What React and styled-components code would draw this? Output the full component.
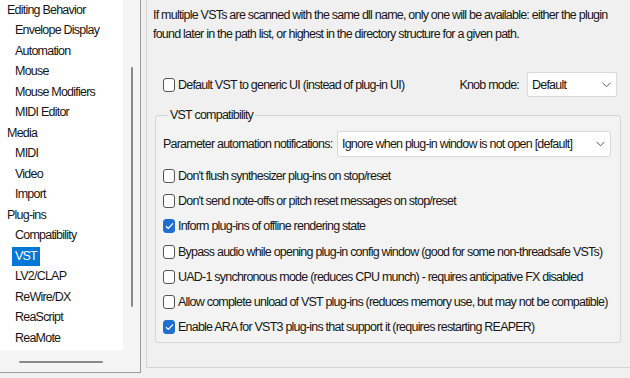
import styled, { createGlobalStyle } from 'styled-components';

const GlobalStyle = createGlobalStyle`
  html, body {
    margin: 0;
    padding: 0;
    background: #f0f0f0;
  }
  body {
    font-family: "Liberation Sans", Arial, sans-serif;
    font-size: 12.5px;
    letter-spacing: -0.78px;
    color: #161616;
  }
  * {
    box-sizing: border-box;
  }
`;

const Window = styled.div`
  display: flex;
  width: 630px;
  height: 378px;
  overflow: hidden;
  background: #f0f0f0;
`;

const TreePanel = styled.div`
  flex: 0 0 141px;
  height: 373px;
  display: grid;
  grid-template-columns: 123px 17px;
  grid-template-rows: 350px 22px;
  border-right: 1px solid #9c9c9c;
  border-bottom: 1px solid #9c9c9c;
  background: #f5f5f5;
`;

const TreeList = styled.div`
  background: #fff;
  overflow: hidden;
`;

const TreeItem = styled.div`
  height: 20.5px;
  display: flex;
  align-items: center;
  padding-left: ${p => (p.$child ? 12 : 4)}px;
  white-space: nowrap;
`;

const TreeLabel = styled.span`
  height: 19px;
  line-height: 19px;
  padding: 0 3px;
  background: ${p => (p.$selected ? '#0078d7' : 'transparent')};
  color: ${p => (p.$selected ? '#fff' : '#161616')};
`;

const VScroll = styled.div`
  padding: 67px 0 0 8px;
`;

const HScroll = styled.div`
  padding: 11px 0 0 19px;
`;

const Thumb = styled.div`
  width: ${p => p.$w}px;
  height: ${p => p.$h}px;
  background: #8a8a8a;
  border-radius: 1px;
`;

const MainBox = styled.div`
  flex: 1;
  height: 368px;
  margin-left: 5px;
  border-left: 1px solid #d6d6d6;
  border-bottom: 1px solid #d6d6d6;
  padding-top: 6px;
`;

const Description = styled.div`
  padding-left: 6px;
  line-height: 19px;
  white-space: nowrap;
`;

const Body = styled.div`
  width: 466px;
  margin: 28px 0 0 8px;
`;

const TopRow = styled.div`
  height: 25px;
  display: flex;
  align-items: center;
  padding: 0 4px 0 8px;
`;

const KnobMode = styled.div`
  margin-left: auto;
  display: flex;
  align-items: center;
  gap: 8px;
  white-space: nowrap;
`;

const Option = styled.label`
  display: flex;
  align-items: center;
  gap: 3px;
  height: ${p => p.$h || 25.3}px;
  white-space: nowrap;
`;

const Box = styled.span`
  flex: 0 0 12px;
  width: 12px;
  height: 14px;
  border-radius: 3px;
  border: 1px solid ${p => (p.$checked ? '#1f6fd1' : '#555')};
  background: ${p => (p.$checked ? '#1f6fd1' : '#fff')};
  display: flex;
  align-items: center;
  justify-content: center;
`;

const Select = styled.div`
  width: ${p => p.$w}px;
  height: ${p => p.$h}px;
  display: flex;
  align-items: center;
  justify-content: space-between;
  padding: 0 5px 0 4px;
  background: #fff;
  border: 1px solid #d9d9d9;
  border-radius: 2px;
  white-space: nowrap;
`;

const Group = styled.fieldset`
  margin: 9px 0 0;
  padding: 6px 9px 4px 7px;
  height: 237px;
  border: 1px solid #d5d5d5;
  border-radius: 3px;
  background: #f3f3f3;
`;

const Legend = styled.legend`
  margin-left: 5px;
  padding: 0 2px;
  line-height: 19px;
`;

const ParamRow = styled.div`
  height: 26px;
  display: flex;
  align-items: center;
  justify-content: space-between;
  margin-bottom: 6px;
  white-space: nowrap;
`;

function Chevron() {
  return (
    <svg width="9" height="6" viewBox="0 0 9 6">
      <polyline points="0.5,0.8 4.5,4.8 8.5,0.8" fill="none" stroke="#5a5a5a" strokeWidth="1" />
    </svg>
  );
}

function Check({ checked, children, h }) {
  return (
    <Option $h={h}>
      <Box $checked={checked}>
        {checked && (
          <svg width="9" height="8" viewBox="0 0 9 8">
            <polyline points="1,4.2 3.3,6.4 8,1.4" fill="none" stroke="#fff" strokeWidth="1.3" />
          </svg>
        )}
      </Box>
      <span>{children}</span>
    </Option>
  );
}

const tree = [
  { label: 'Editing Behavior' },
  { label: 'Envelope Display', child: true },
  { label: 'Automation', child: true },
  { label: 'Mouse', child: true },
  { label: 'Mouse Modifiers', child: true },
  { label: 'MIDI Editor', child: true },
  { label: 'Media' },
  { label: 'MIDI', child: true },
  { label: 'Video', child: true },
  { label: 'Import', child: true },
  { label: 'Plug-ins' },
  { label: 'Compatibility', child: true },
  { label: 'VST', child: true, selected: true },
  { label: 'LV2/CLAP', child: true },
  { label: 'ReWire/DX', child: true },
  { label: 'ReaScript', child: true },
  { label: 'ReaMote', child: true },
];

const options = [
  { label: "Don't flush synthesizer plug-ins on stop/reset" },
  { label: "Don't send note-offs or pitch reset messages on stop/reset" },
  { label: 'Inform plug-ins of offline rendering state', checked: true },
  { label: 'Bypass audio while opening plug-in config window (good for some non-threadsafe VSTs)' },
  { label: 'UAD-1 synchronous mode (reduces CPU munch) - requires anticipative FX disabled' },
  { label: 'Allow complete unload of VST plug-ins (reduces memory use, but may not be compatible)' },
  { label: 'Enable ARA for VST3 plug-ins that support it (requires restarting REAPER)', checked: true },
];

export default function App() {
  return (
    <>
      <GlobalStyle />
      <Window>
        <TreePanel>
          <TreeList>
            {tree.map(item => (
              <TreeItem key={item.label} $child={item.child}>
                <TreeLabel $selected={item.selected}>{item.label}</TreeLabel>
              </TreeItem>
            ))}
          </TreeList>
          <VScroll>
            <Thumb $w={2} $h={240} />
          </VScroll>
          <HScroll>
            <Thumb $w={84} $h={2} />
          </HScroll>
          <div />
        </TreePanel>

        <MainBox>
          <Description>
            If multiple VSTs are scanned with the same dll name, only one will be available: either the plugin
            <br />
            found later in the path list, or highest in the directory structure for a given path.
          </Description>

          <Body>
            <TopRow>
              <Check>Default VST to generic UI (instead of plug-in UI)</Check>
              <KnobMode>
                <span>Knob mode:</span>
                <Select $w={90} $h={25}>
                  <span>Default</span>
                  <Chevron />
                </Select>
              </KnobMode>
            </TopRow>

            <Group>
              <Legend>VST compatibility</Legend>
              <ParamRow>
                <span>Parameter automation notifications:</span>
                <Select $w={274} $h={26}>
                  <span>Ignore when plug-in window is not open [default]</span>
                  <Chevron />
                </Select>
              </ParamRow>
              {options.map(o => (
                <Check key={o.label} checked={o.checked}>{o.label}</Check>
              ))}
            </Group>
          </Body>
        </MainBox>
      </Window>
    </>
  );
}
